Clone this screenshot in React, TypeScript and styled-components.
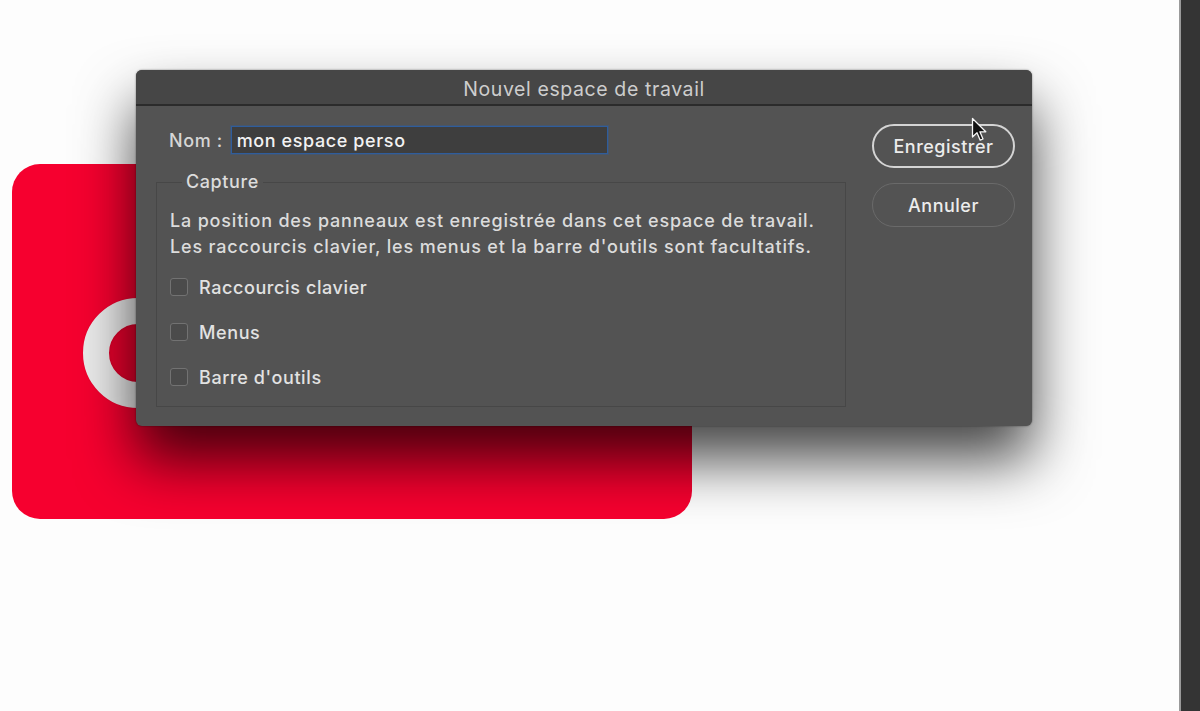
import React from "react";
import styled, { createGlobalStyle } from "styled-components";

const Global = createGlobalStyle`
  html, body { margin: 0; padding: 0; }
  body { font-family: Inter, "Liberation Sans", sans-serif; background: #fdfdfd; }
`;

const Page = styled.div`
  display: flex;
  width: 1200px;
  height: 711px;
  overflow: hidden;
`;

const Canvas = styled.div`
  position: relative;
  flex: 1;
  background: #fdfdfd;
  padding-top: 164px;
  padding-left: 12px;
  box-sizing: border-box;
`;

const SideStrip = styled.div`
  width: 21px;
  background: #343434;
  border-left: 2px solid #9a9a9a;
  box-sizing: border-box;
`;

const Card = styled.div`
  position: relative;
  width: 680px;
  height: 355px;
  border-radius: 28px;
  background: #f6002f;
`;

const Ring = styled.div`
  position: absolute;
  left: 71px;
  top: 134px;
  width: 110px;
  height: 110px;
  border-radius: 50%;
  box-sizing: border-box;
  border: 26px solid #ebebeb;
  background: #e8002c;
  box-shadow: inset 0 0 3px rgba(0, 0, 0, 0.15), 0 0 2px rgba(0, 0, 0, 0.1);
`;

const Dialog = styled.div`
  position: absolute;
  left: 136px;
  top: 70px;
  width: 896px;
  border-radius: 6px;
  background: #535353;
  overflow: hidden;
  box-shadow: 0 34px 58px rgba(0, 0, 0, 0.72), 0 0 2px rgba(0, 0, 0, 0.5);
`;

const TitleBar = styled.div`
  height: 36px;
  padding-top: 4px;
  box-sizing: border-box;
  background: #464646;
  border-bottom: 2px solid #2b2b2b;
  display: flex;
  align-items: center;
  justify-content: center;
  color: #cdcdcd;
  font-size: 19.5px;
  letter-spacing: 0.6px;
`;

const Body = styled.div`
  display: flex;
  gap: 26px;
  padding: 18px 17px 19px 20px;
`;

const MainCol = styled.div`
  width: 690px;
  display: flex;
  flex-direction: column;
  gap: 17px;
  padding-top: 2px;
`;

const NameRow = styled.div`
  display: flex;
  align-items: center;
  gap: 8px;
  padding-left: 13px;
  height: 28px;
`;

const Label = styled.span`
  color: #d6d6d6;
  font-size: 18px;
  font-weight: 500;
  letter-spacing: 0.6px;
`;

const Field = styled.div`
  width: 370px;
  height: 26px;
  background: #3e3e3e;
  border: 1px solid #2f5d9c;
  box-shadow: 0 0 0 1px rgba(47, 93, 156, 0.35);
  color: #f2f2f2;
  font-size: 18px;
  font-weight: 500;
  letter-spacing: 0.6px;
  display: flex;
  align-items: center;
  padding-left: 5px;
  box-sizing: content-box;
`;

const Group = styled.fieldset`
  margin: 0;
  border: 1px solid #474747;
  padding: 15px 14px 18px 13px;
  display: flex;
  flex-direction: column;
`;

const Legend = styled.legend`
  margin-left: 12px;
  padding: 0 4px;
  color: #dcdcdc;
  font-size: 18px;
  font-weight: 500;
  letter-spacing: 0.6px;
  line-height: 22px;
`;

const Description = styled.p`
  margin: 0;
  color: #dcdcdc;
  font-size: 18px;
  font-weight: 500;
  letter-spacing: 0.82px;
  line-height: 26px;
  white-space: nowrap;
`;

const Options = styled.div`
  display: flex;
  flex-direction: column;
  gap: 23px;
  margin-top: 16px;
`;

const Option = styled.label`
  display: flex;
  align-items: center;
  gap: 11px;
  height: 22px;
  color: #e2e2e2;
  font-size: 18px;
  font-weight: 500;
  letter-spacing: 0.6px;
`;

const Box = styled.span`
  width: 16px;
  height: 16px;
  border: 1px solid #727272;
  border-radius: 3px;
  background: #4b4b4b;
`;

const ButtonCol = styled.div`
  display: flex;
  flex-direction: column;
  gap: 15px;
  position: relative;
`;

const Button = styled.div<{ $primary?: boolean }>`
  width: 143px;
  height: 44px;
  box-sizing: border-box;
  border-radius: 22px;
  border: ${(p) => (p.$primary ? "2px solid #d4d4d4" : "1px solid #6a6a6a")};
  display: flex;
  align-items: center;
  justify-content: center;
  color: #ececec;
  font-size: 18px;
  font-weight: 500;
  letter-spacing: 0.5px;
`;

const Cursor = styled.svg`
  position: absolute;
  left: 99px;
  top: -7px;
  width: 18px;
  height: 26px;
`;

export default function App() {
  return (
    <>
      <Global />
      <Page>
        <Canvas>
          <Card>
            <Ring />
          </Card>
          <Dialog>
            <TitleBar>Nouvel espace de travail</TitleBar>
            <Body>
              <MainCol>
                <NameRow>
                  <Label>Nom :</Label>
                  <Field>mon espace perso</Field>
                </NameRow>
                <Group>
                  <Legend>Capture</Legend>
                  <Description>
                    La position des panneaux est enregistrée dans cet espace de travail.
                    <br />
                    Les raccourcis clavier, les menus et la barre d'outils sont facultatifs.
                  </Description>
                  <Options>
                    <Option>
                      <Box />
                      Raccourcis clavier
                    </Option>
                    <Option>
                      <Box />
                      Menus
                    </Option>
                    <Option>
                      <Box />
                      Barre d'outils
                    </Option>
                  </Options>
                </Group>
              </MainCol>
              <ButtonCol>
                <Button $primary>Enregistrer</Button>
                <Button>Annuler</Button>
                <Cursor viewBox="0 0 18 26">
                  <path
                    d="M1.5 1.5 L1.5 20 L6 15.8 L9.2 23.2 L12 22 L8.9 14.8 L14.8 14.8 Z"
                    fill="#111"
                    stroke="#f5f5f5"
                    strokeWidth="1.3"
                    strokeLinejoin="round"
                  />
                </Cursor>
              </ButtonCol>
            </Body>
          </Dialog>
        </Canvas>
        <SideStrip />
      </Page>
    </>
  );
}
